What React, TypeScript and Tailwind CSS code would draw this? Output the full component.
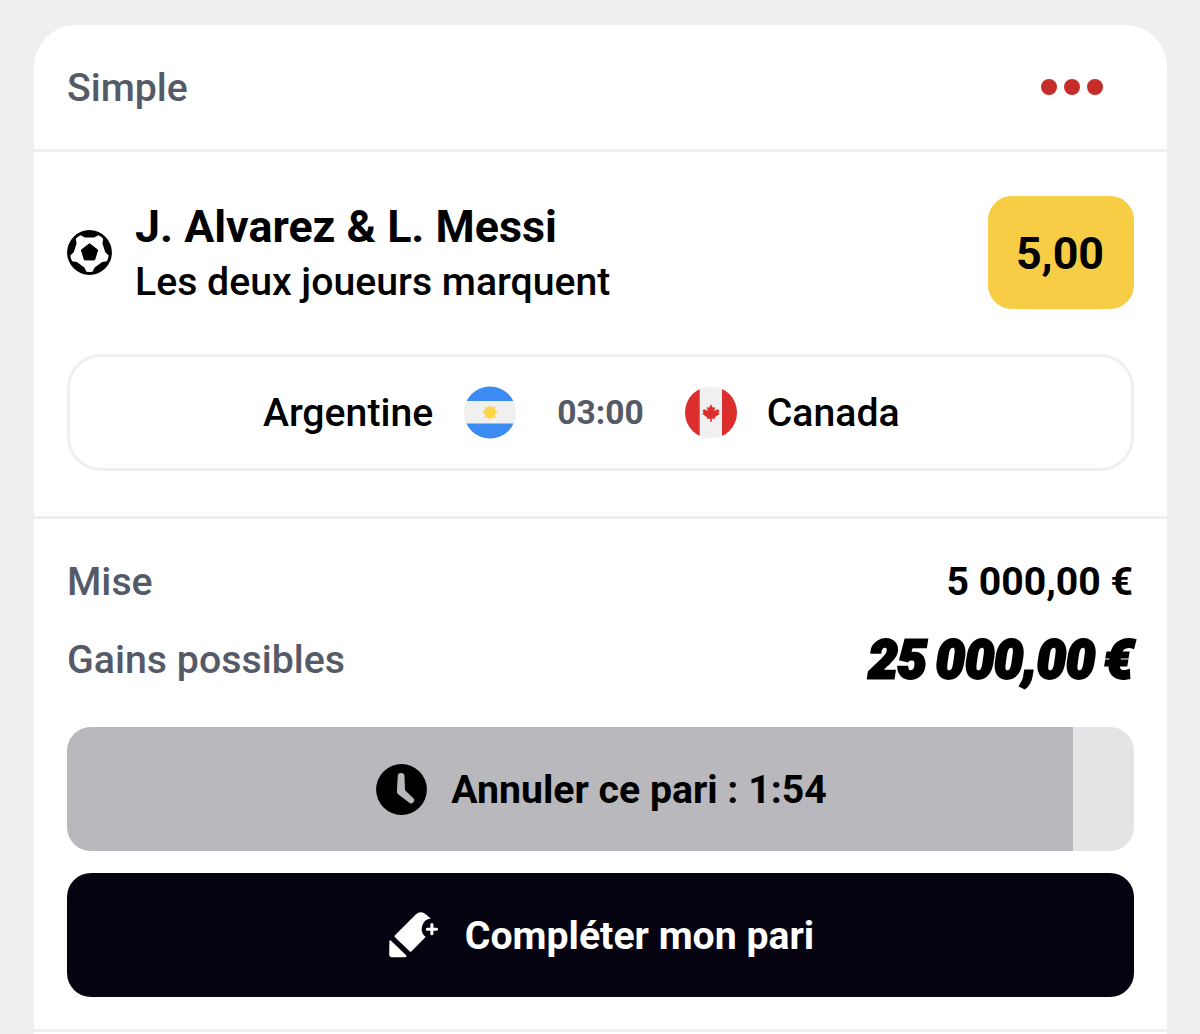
import type { ReactNode } from 'react';

const STAKE = '5 000,00 €';
const WINNINGS = '25 000,00 €';
const CANCEL_PROGRESS = 94.3;

// outline of the white part of the ball, repeated for each of the five black patches
const BALL_OUTLINE = [0, 72, 144, 216, 288]
  .flatMap((start) => [
    [start - 17, 15.8],
    [start + 17, 15.8],
    [start + 27, 19.4],
    [start + 36, 19.6],
    [start + 45, 19.4],
  ])
  .map(([angle, radius]) => {
    const rad = (angle * Math.PI) / 180;
    return `${(radius * Math.sin(rad)).toFixed(2)},${(-radius * Math.cos(rad)).toFixed(2)}`;
  })
  .join(' ');

function BallIcon() {
  return (
    <svg className="h-[45px] w-[45px] shrink-0" viewBox="-22.5 -22.5 45 45">
      <circle r="22.4" fill="#000" />
      <polygon points={BALL_OUTLINE} fill="#fff" />
      <path d="M0 -8.8 L8.2 -2.5 L5.1 7.4 H-5.1 L-8.2 -2.5 Z" fill="#000" stroke="#000" strokeWidth="1" strokeLinejoin="round" />
    </svg>
  );
}

function ArgentinaFlag() {
  return (
    <svg className="h-[53px] w-[53px] shrink-0" viewBox="0 0 53 53">
      <clipPath id="flag-ar">
        <circle cx="27" cy="26.5" r="26" />
      </clipPath>
      <g clipPath="url(#flag-ar)">
        <rect width="53" height="53" fill="#f0f0f0" />
        <rect width="53" height="15" fill="#3c8bf2" />
        <rect y="37.5" width="53" height="15.5" fill="#3c8bf2" />
      </g>
      <g fill="#fad648">
        <circle cx="27" cy="26.3" r="5.6" />
        {[0, 45, 90, 135, 180, 225, 270, 315].map((angle) => (
          <path key={angle} transform={`rotate(${angle} 27 26.3)`} d="M27 18.4 L29.5 22.5 H24.5 Z" />
        ))}
      </g>
    </svg>
  );
}

function CanadaFlag() {
  return (
    <svg className="h-[53px] w-[53px] shrink-0" viewBox="0 0 53 53">
      <clipPath id="flag-ca">
        <circle cx="26" cy="26.5" r="26" />
      </clipPath>
      <g clipPath="url(#flag-ca)">
        <rect width="53" height="53" fill="#f0f0f0" />
        <rect width="14.7" height="53" fill="#dc2f2d" />
        <rect x="37" width="16" height="53" fill="#dc2f2d" />
      </g>
      <path
        transform="translate(-0.5 0.3)"
        d="M26.5 18 L28.4 21.4 L30.6 20.6 L29.8 25 L32.4 23 L35 24 L34 26.3 L35.2 27.4 L30.2 31.3 L30.6 32.8 L27.3 32.2 V35.4 H25.7 V32.2 L22.4 32.8 L22.8 31.3 L17.8 27.4 L19 26.3 L18 24 L20.6 23 L23.2 25 L22.4 20.6 L24.6 21.4 Z"
        fill="#dc2f2d"
      />
    </svg>
  );
}

function ClockIcon() {
  return (
    <svg className="h-[51px] w-[51px] shrink-0" viewBox="0 0 51 51">
      <circle cx="25.5" cy="25.5" r="25.4" fill="#000" />
      <path
        d="M25.1 9 a3.4 3.4 0 0 1 3.4 3.4 L29 26.2 L37.1 34 a3 3 0 0 1 -4.1 4.6 L22.1 30.2 Q20.8 29.2 20.9 27.6 L21.7 12.4 A3.4 3.4 0 0 1 25.1 9 Z"
        fill="#b9b8bd"
      />
    </svg>
  );
}

function MarkerPlusIcon() {
  return (
    <svg className="h-[46px] w-[49px] shrink-0" viewBox="0 0 49 46" fill="#fff">
      <path d="M6 25.2 Q5 24.2 6 23.2 L26.7 2.6 Q31.8 -2 37 2.4 L41.8 6.6 A10.4 10.4 0 0 0 36.6 25 L22.6 39.2 Q21.6 40.2 20.6 39.2 Z" />
      <path d="M0.4 29.2 Q0.8 27.6 2.3 28.9 L17.2 43.2 Q18.2 44.8 16.3 45.2 H3.2 Q0.2 45.2 0.2 42.2 Z" />
      <path d="M42.9 12.6 V21.8 M38.3 17.2 H47.5" fill="none" stroke="#fff" strokeWidth="3.1" strokeLinecap="round" />
    </svg>
  );
}

function SummaryRow({ label, children }: { label: string; children: ReactNode }) {
  return (
    <div className="flex h-[78px] items-center justify-between">
      <span className="text-[39.3px] font-medium text-[#555a68]">{label}</span>
      {children}
    </div>
  );
}

export default function App() {
  return (
    <div className="h-[1034px] w-[1200px] overflow-hidden bg-[#eeeff1] pl-[34px] pt-[25px] font-[Roboto,sans-serif] text-black">
      <div className="h-[1100px] w-[1133px] rounded-t-[42px] bg-white">
        <div className="flex h-[127px] items-center justify-between border-b-[3px] border-[#efeff0] pl-[33px] pr-[64px]">
          <span className="pt-[2px] text-[39.2px] font-medium text-[#555a68]">Simple</span>
          <div className="flex gap-[7px]">
            <span className="size-4 rounded-full bg-[#c62c29]" />
            <span className="size-4 rounded-full bg-[#c62c29]" />
            <span className="size-4 rounded-full bg-[#c62c29]" />
          </div>
        </div>

        <div className="h-[367px] border-b-[3px] border-[#efeff0] px-[33px] pt-[44px]">
          <div className="flex h-[113px] items-center">
            <BallIcon />
            <div className="ml-[23px] flex-1 pt-[2px] whitespace-nowrap">
              <div className="text-[44.8px] leading-[56px] font-bold">J. Alvarez &amp; L. Messi</div>
              <div className="text-[39.2px] leading-[54px] font-medium">Les deux joueurs marquent</div>
            </div>
            <div className="flex h-[113px] w-[146px] items-center justify-center rounded-[24px] bg-[#f7cd46] pt-[3px] pr-[2px] text-[44.8px] font-bold">
              5,00
            </div>
          </div>

          <div className="mt-[45px] grid h-[117px] grid-cols-[1fr_auto_1fr] items-center rounded-[34px] border-[3px] border-[#efeff0] text-[39.2px] font-medium">
            <div className="flex items-center justify-end gap-[30px]">
              <span className="pt-[2px]">Argentine</span>
              <ArgentinaFlag />
            </div>
            <span className="mx-[41px] pt-[2px] text-[33.6px] font-bold text-[#555a68]">03:00</span>
            <div className="flex items-center gap-[29px]">
              <CanadaFlag />
              <span className="pt-[2px]">Canada</span>
            </div>
          </div>
        </div>

        <div className="h-[513px] border-b-[3px] border-[#efeff0] px-[33px] pt-[24px]">
          <SummaryRow label="Mise">
            <span className="pr-px text-[39.2px] font-bold">{STAKE}</span>
          </SummaryRow>
          <SummaryRow label="Gains possibles">
            <span className="origin-right scale-x-[0.98] pt-[2px] pr-px text-[53px] font-black italic [-webkit-text-stroke:2.8px_#000] [word-spacing:-4px]">
              {WINNINGS}
            </span>
          </SummaryRow>

          <button className="relative mt-[28px] flex h-[124px] w-full items-center justify-center gap-[24px] overflow-hidden rounded-[24px] bg-[#e4e4e6] pl-[2px] text-[39.2px] font-bold">
            <div className="absolute inset-y-0 left-0 bg-[#b9b8bd]" style={{ width: `${CANCEL_PROGRESS}%` }} />
            <span className="relative">
              <ClockIcon />
            </span>
            <span className="relative pt-[2px]">Annuler ce pari : 1:54</span>
          </button>

          <button className="mt-[22px] flex h-[124px] w-full items-center justify-center gap-[27px] rounded-[24px] bg-[#04030f] pl-[2px] text-[39.2px] font-bold text-white">
            <MarkerPlusIcon />
            <span className="pt-[2px]">Compléter mon pari</span>
          </button>
        </div>
      </div>
    </div>
  );
}
